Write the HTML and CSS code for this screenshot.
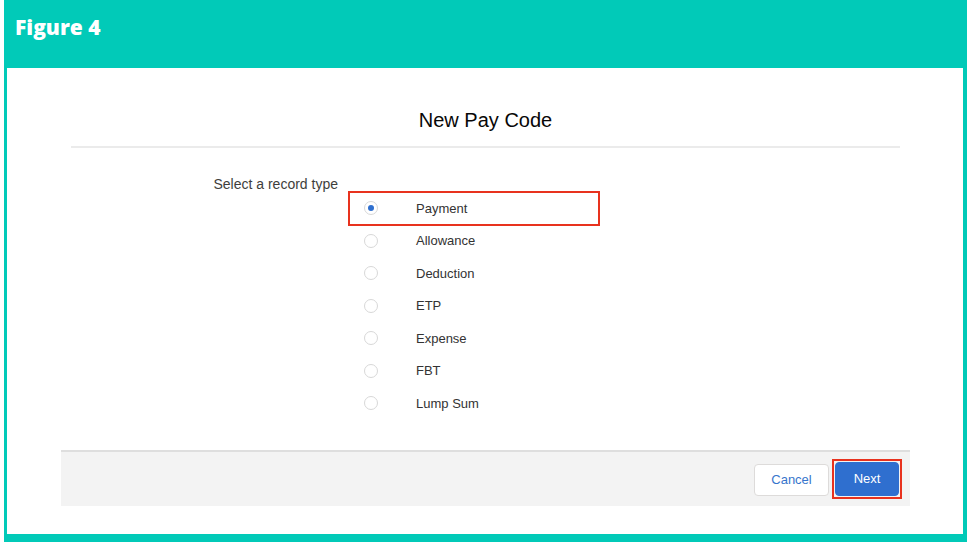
FILE: index.html
```html
<!doctype html>
<html>
<head>
  <title>Figure 4 | New Pay Code</title>
  <meta charset='UTF-8'>
  <meta name='viewport' content='width=device-width, initial-scale=1'>
  <link rel="stylesheet" href="styles.css">
</head>
<body>
  <div class="frame">
    <header class="figure-bar">Figure 4</header>
    <div class="sheet">
      <section class="modal">
        <h1 class="modal-title">New Pay Code</h1>
        <div class="modal-body">
          <div class="field-label">Select a record type</div>
          <ul class="record-types">
            <li class="highlight"><span class="radio checked"></span>Payment</li>
            <li><span class="radio"></span>Allowance</li>
            <li><span class="radio"></span>Deduction</li>
            <li><span class="radio"></span>ETP</li>
            <li><span class="radio"></span>Expense</li>
            <li><span class="radio"></span>FBT</li>
            <li><span class="radio"></span>Lump Sum</li>
          </ul>
        </div>
        <footer class="modal-footer">
          <button class="btn btn-neutral">Cancel</button>
          <span class="highlight-box"><button class="btn btn-brand">Next</button></span>
        </footer>
      </section>
    </div>
  </div>
</body>
</html>
```

FILE: styles.css
```css
html, body { height: 100% }
body {
  margin: 0;
  background: #fff;
  font-family: 'Liberation Sans', Arial, sans-serif;
  overflow: hidden }
.frame {
  margin-left: 4px;
  width: 963px;
  height: 542px;
  background: #01cab8;
  display: flex;
  flex-flow: column }
  .figure-bar {
    height: 68px;
    box-sizing: border-box;
    padding: 13px 0 0 11px;
    font: 800 21px/28px 'Open Sans', sans-serif;
    color: #fff }
  .sheet {
    margin: 0 4px 0 3px;
    height: 466px;
    background: #fff }
.modal {
  margin-left: 54px;
  width: 849px }
  .modal-title {
    margin: 0 10px;
    padding: 39px 0 13px;
    border-bottom: 2px solid #ebebeb;
    font: normal 20px/26px 'Liberation Sans', Arial, sans-serif;
    color: #080707;
    text-align: center }
  .modal-body {
    display: grid;
    grid-template-columns: 277px 250px;
    column-gap: 11px;
    align-items: start;
    padding-bottom: 30px }
    .field-label {
      margin-top: 27px;
      font-size: 14px;
      line-height: 19px;
      color: #3e3e3c;
      text-align: right }
    .record-types {
      list-style: none;
      margin: 44px 0 0;
      padding: 0 }
      .record-types > li {
        height: 32.5px;
        display: flex;
        align-items: center;
        padding-left: 15px;
        font-size: 13px;
        color: #333 }
      .radio {
        width: 14px;
        height: 14px;
        box-sizing: border-box;
        border: 1px solid #d8d8d8;
        border-radius: 50%;
        margin-right: 38px;
        display: flex;
        align-items: center;
        justify-content: center }
      .radio.checked::after {
        content: "";
        width: 6px;
        height: 6px;
        border-radius: 50%;
        background: #2f6fcf }
  .highlight {
    outline: 2px solid #e8321e;
    outline-offset: -1px }
  .modal-footer {
    height: 54px;
    border-top: 2px solid #dedede;
    background: #f3f3f3;
    display: flex;
    justify-content: flex-end;
    align-items: center;
    gap: 3px;
    padding: 0 8px }
    .highlight-box {
      display: flex;
      padding: 1px;
      border: 2px solid #e8321e }
    .btn {
      font: 13px 'Liberation Sans', Arial, sans-serif;
      border-radius: 4px;
      cursor: pointer }
    .btn-neutral {
      width: 75px;
      height: 32px;
      margin-top: 2px;
      background: #fff;
      color: #3775cc;
      border: 1px solid #dddbda }
    .btn-brand {
      width: 64px;
      height: 34px;
      background: #2f6fcf;
      color: #fff;
      border: 1px solid #2f6fcf }
```
